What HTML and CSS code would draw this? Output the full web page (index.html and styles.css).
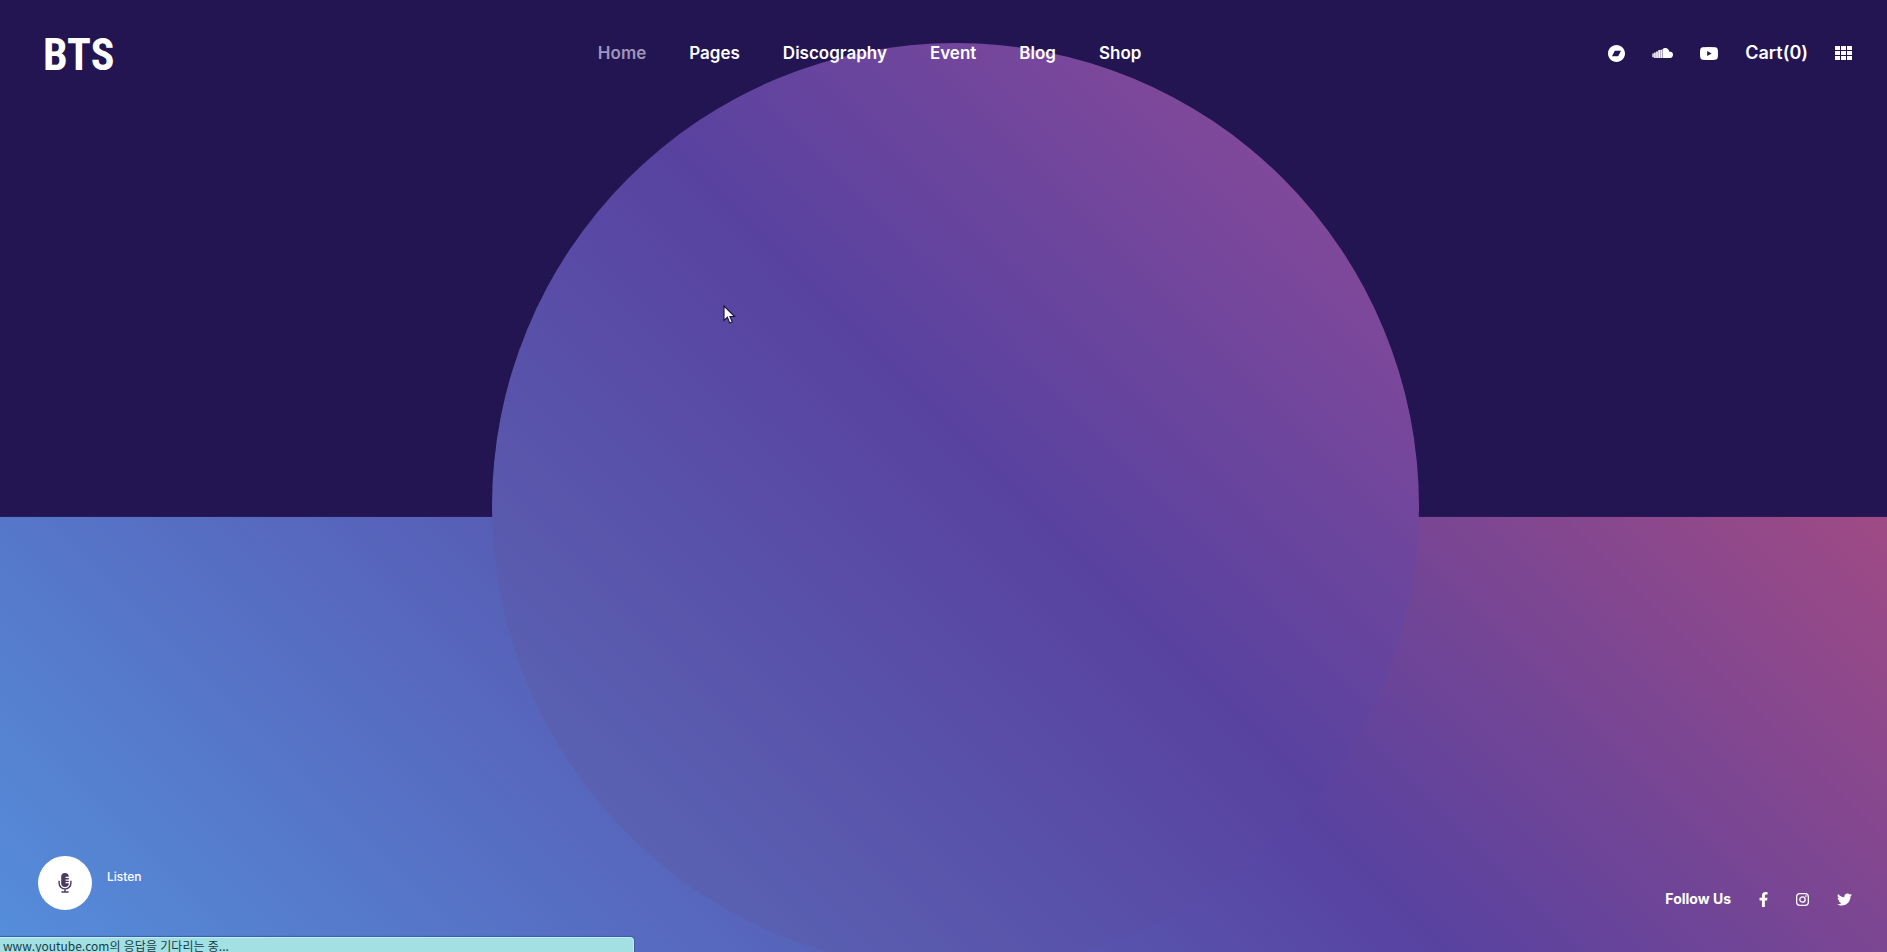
FILE: index.html
```html
<!DOCTYPE html>
<html lang="en">
<head>
<meta charset="utf-8">
<title>BTS</title>
<link rel="stylesheet" href="styles.css">
</head>
<body>
<div class="page">
  <div class="disc"></div>
  <header class="header">
    <a class="logo" href="#">BTS</a>
    <nav class="nav">
      <a class="nav-link current" href="#">Home</a>
      <a class="nav-link" href="#">Pages</a>
      <a class="nav-link" href="#">Discography</a>
      <a class="nav-link" href="#">Event</a>
      <a class="nav-link" href="#">Blog</a>
      <a class="nav-link" href="#">Shop</a>
    </nav>
    <div class="tools">
      <a href="#" aria-label="Bandcamp"><svg width="17" height="17" viewBox="8 8 496 496"><path d="M256,8C119,8,8,119,8,256S119,504,256,504,504,393,504,256,393,8,256,8Zm48.2,326.1h-181L207.9,178h181Z"/></svg></a>
      <a href="#" aria-label="SoundCloud"><svg width="21" height="11" viewBox="0 0 21 11"><path d="M10.500 1.200C11.200.4 12.300 0 13.300 0c2.200 0 4 1.700 4.200 4 .3-.1.600-.2 1-.2 1.400 0 2.500 1.100 2.500 2.900S19.700 10 18.300 10h-7.800z"/><path d="M8.300 1.700h1.900V10H8.300zM6.200 2h1.800v8H6.200zM4.100 3.600h1.800V10H4.100zM2.100 4.400h1.700V10H2.100zM.3 5.600h1.500v3.600H.3z" opacity=".95"/></svg></a>
      <a href="#" aria-label="YouTube"><svg width="18" height="13" viewBox="0 0 18 13"><path fill-rule="evenodd" d="M2.500.3Q9-.3 15.500.3 17.600.6 17.800 2.700q.4 3.800 0 7.600-.2 2.100-2.300 2.400-6.500.6-13 0Q.4 12.400.2 10.300q-.4-3.800 0-7.600Q.4.600 2.500.3zM7.200 4v5l4.400-2.500z"/></svg></a>
      <a class="cart" href="#">Cart(0)</a>
      <button class="menu" type="button" aria-label="Menu"><svg width="17" height="14" viewBox="0 0 17 14"><path d="M0 0h5v4H0zM6 0h5v4H6zM12 0h5v4h-5zM0 5h5v4H0zM6 5h5v4H6zM12 5h5v4h-5zM0 10h5v4H0zM6 10h5v4H6zM12 10h5v4h-5z"/></svg></button>
    </div>
  </header>

  <footer class="footer">
    <div class="listen">
      <button class="mic" type="button" aria-labelledby="listen-label"><svg width="14" height="20" viewBox="0 0 14 21"><path d="M7 0a4 4 0 0 1 4 4H7.600v1.300H11v1.500H7.600v1.300H11v1.400H7.600v1.200H11a4 4 0 0 1-8 0V4a4 4 0 0 1 4-4z"/><path d="M.8 8.200v2.300a6.200 6.200 0 0 0 12.400 0V8.200M7 16.700v3.200M3.200 19.900h7.600" fill="none" stroke="currentColor" stroke-width="1.500"/></svg></button>
      <span id="listen-label" class="listen-label">Listen</span>
    </div>
    <div class="follow">
      <span>Follow Us</span>
      <a href="#" aria-label="Facebook"><svg width="9" height="15" viewBox="22 0 272 512"><path d="M279.140 288l14.220-92.660h-88.910v-60.130c0-25.350 12.420-50.060 52.240-50.060h40.420V6.260S260.430 0 225.360 0c-73.220 0-121.080 44.380-121.080 124.720v70.620H22.890V288h81.390v224h100.170V288z"/></svg></a>
      <a href="#" aria-label="Instagram"><svg width="13" height="13" viewBox="0 0 14 14"><g fill="none" stroke="currentColor" stroke-width="1.400"><rect x=".7" y=".7" width="12.600" height="12.600" rx="3.600"/><circle cx="7" cy="7" r="2.900"/></g><circle cx="10.700" cy="3.300" r=".9"/></svg></a>
      <a href="#" aria-label="Twitter"><svg width="15" height="13" viewBox="0 48 512 416"><path d="M459.370 151.716c.325 4.548.325 9.097.325 13.645 0 138.720-105.583 298.558-298.558 298.558-59.452 0-114.680-17.219-161.137-47.106 8.447.974 16.568 1.299 25.340 1.299 49.055 0 94.213-16.568 130.274-44.832-46.132-.975-84.792-31.188-98.112-72.772 6.498.974 12.995 1.624 19.818 1.624 9.421 0 18.843-1.300 27.614-3.573-48.081-9.747-84.143-51.980-84.143-102.985v-1.299c13.969 7.797 30.214 12.670 47.431 13.319-28.264-18.843-46.781-51.005-46.781-87.391 0-19.492 5.197-37.360 14.294-52.954 51.655 63.675 129.300 105.258 216.365 109.807-1.624-7.797-2.599-15.918-2.599-24.040 0-57.828 46.782-104.934 104.934-104.934 30.213 0 57.502 12.670 76.670 33.137 23.715-4.548 46.456-13.320 66.599-25.340-7.798 24.366-24.366 44.833-46.132 57.827 21.117-2.273 41.584-8.122 60.426-16.243-14.292 20.791-32.161 39.308-52.628 54.253z"/></svg></a>
    </div>
  </footer>

  <div class="status" lang="ko">www.youtube.com의 응답을 기다리는 중...</div>
  <svg class="cursor" width="13" height="20" viewBox="0 0 13 20"><path d="M1 1v14.500l3.400-3.200 2.300 5.600 2.500-1-2.300-5.400h4.800z" fill="#fff" stroke="#17103c" stroke-width="1.100"/></svg>
</div>
</body>
</html>
```
FILE: styles.css
```css
* {
  box-sizing: border-box;
}

body {
  margin: 0;
  font-family: Inter, "Noto Sans CJK KR", sans-serif;
  color: #fff;
}

.page {
  position: relative;
  display: flex;
  flex-direction: column;
  justify-content: space-between;
  min-height: 100vh;
  overflow: hidden;
  background:
    linear-gradient(#231452, #231452) top / 100% 54.3% no-repeat,
    linear-gradient(45deg, #558edb 0%, #5842a0 51%, #c94f74 100%);
}

.disc {
  position: absolute;
  top: 4.5%;
  left: 26.05%;
  width: 49.15%;
  aspect-ratio: 1;
  border-radius: 50%;
  background: linear-gradient(45deg, #5a6dba 0%, #5842a0 54%, #924b97 100%);
}

a {
  color: inherit;
  text-decoration: none;
}

button {
  padding: 0;
  border: 0;
  background: none;
  color: inherit;
  font: inherit;
}

svg {
  display: block;
  fill: currentColor;
}

.header {
  position: relative;
  display: flex;
  align-items: center;
  justify-content: space-between;
  padding: 21px 35px 0 43px;
}

.logo {
  min-width: 88px;
  padding-top: 4px;
  font-family: "Liberation Sans Narrow", "Roboto Condensed", "Liberation Sans", sans-serif;
  font-size: 44px;
  font-weight: 700;
  line-height: 60px;
}

.nav {
  display: flex;
  gap: 43px;
  font-size: 17px;
  font-weight: 600;
  line-height: 24px;
}

.current {
  color: #9f95b9;
}

.tools {
  display: flex;
  align-items: center;
  gap: 27px;
}

.cart {
  font-size: 18px;
  font-weight: 600;
  line-height: 24px;
}

.footer {
  position: relative;
  display: flex;
  align-items: flex-end;
  justify-content: space-between;
  padding: 0 35px 42px 38px;
}

.listen {
  display: flex;
  gap: 15px;
}

.mic {
  display: grid;
  place-items: center;
  width: 54px;
  height: 54px;
  border-radius: 50%;
  background: #fff;
  color: #4b3b63;
}

.listen-label {
  padding-top: 12px;
  font-size: 12px;
  font-weight: 500;
  line-height: 18px;
}

.follow {
  display: flex;
  align-items: center;
  gap: 28px;
  font-size: 14px;
  font-weight: 700;
  line-height: 22px;
}

.status {
  position: absolute;
  bottom: 0;
  left: 0;
  width: 33.6%;
  height: 15px;
  padding-left: 3px;
  border-top: 1px solid #b9f1f7;
  border-right: 1px solid #b9f1f7;
  border-top-right-radius: 4px;
  box-shadow: 0 0 1px 1px #4659a0;
  background: #a2e0e4;
  color: #173b45;
  font-family: "Noto Sans CJK KR", sans-serif;
  font-size: 12px;
  line-height: 16px;
  white-space: nowrap;
}

.cursor {
  position: absolute;
  top: 32%;
  left: 38.3%;
}
```
